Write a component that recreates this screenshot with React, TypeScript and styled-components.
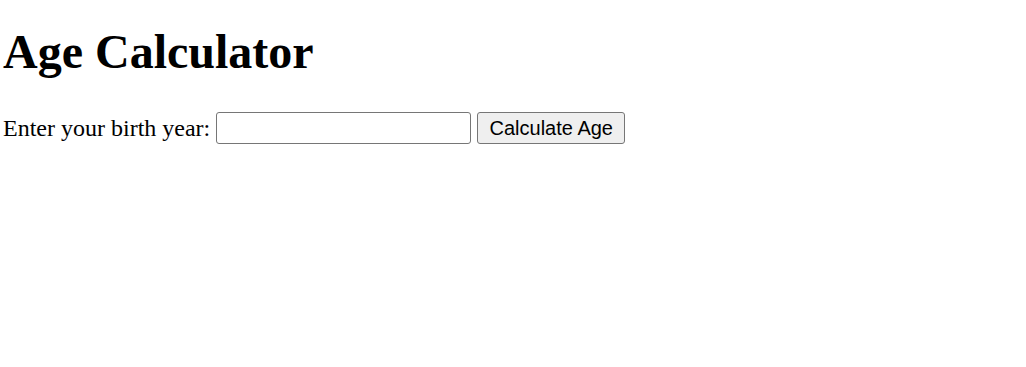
import { useState } from "react";
import styled, { createGlobalStyle } from "styled-components";

const GlobalStyle = createGlobalStyle`
  body {
    margin: 0;
    padding: 0 3px;
    background: #ffffff;
    color: #000000;
    font-family: "Liberation Serif", "Times New Roman", serif;
  }
`

const Page = styled.main`
  display: flex;
  flex-direction: column;
`

const Title = styled.h1`
  font-size: 48px;
  font-weight: 700;
  line-height: 55px;
  margin: 24px 0 33px;
`

const Row = styled.div`
  display: flex;
  align-items: center;
  gap: 6px;
  font-size: 24px;
  line-height: 28px;
`

const Label = styled.label``

const YearInput = styled.input`
  box-sizing: border-box;
  width: 255px;
  height: 32px;
  padding: 1px 3px;
  border: 1px solid #767676;
  border-radius: 3px;
  background: #ffffff;
  font-family: "Liberation Sans", Arial, sans-serif;
  font-size: 20px;
  outline: none;
`

const Button = styled.button`
  box-sizing: border-box;
  width: 148px;
  height: 32px;
  padding: 0 8px;
  border: 1px solid #767676;
  border-radius: 3px;
  background: #efefef;
  color: #000000;
  font-family: "Liberation Sans", Arial, sans-serif;
  font-size: 20px;
  cursor: pointer;
`

const Result = styled.p`
  font-size: 24px;
  margin: 24px 0 0;
`

const App = () => {
  const [year, setYear] = useState("")
  const [age, setAge] = useState<number | null>(null)

  const calculate = () => {
    const y = parseInt(year, 10)
    if (!isNaN(y)) setAge(new Date().getFullYear() - y)
  }

  return (
    <Page>
      <GlobalStyle />
      <Title>Age Calculator</Title>
      <Row>
        <Label htmlFor="birth-year">Enter your birth year:</Label>
        <YearInput
          id="birth-year"
          type="text"
          value={year}
          onChange={(e) => setYear(e.target.value)}
        />
        <Button onClick={calculate}>Calculate Age</Button>
      </Row>
      {age !== null && <Result>Your age is {age}</Result>}
    </Page>
  )
};

export default App;
